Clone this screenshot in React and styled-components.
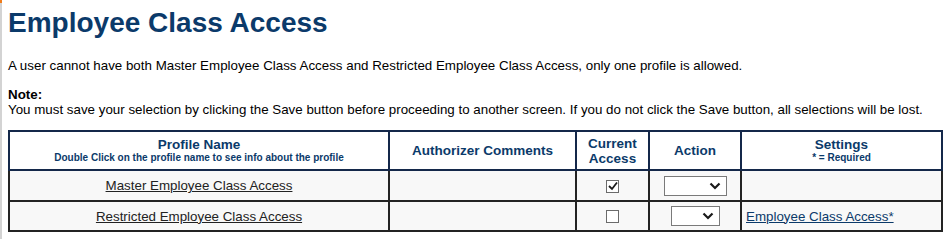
import React from 'react';
import styled, { createGlobalStyle } from 'styled-components';

const GlobalStyle = createGlobalStyle`
  html, body { margin: 0; padding: 0; background: #fff; }
  body { font-family: "Liberation Sans", Arial, sans-serif; color: #000; }
`;

const Page = styled.div`
  position: relative;
  border-left: 2px solid #d3d3d3;
  padding: 0 6px 10px 6px;
  min-height: 239px;
  box-sizing: border-box;
  &::before {
    content: '';
    position: absolute;
    left: -2px;
    top: 0;
    width: 2px;
    height: 3px;
    background: #f07c1a;
  }
`;

const Title = styled.h1`
  margin: 0;
  padding-top: 5px;
  font-size: 28px;
  line-height: 36px;
  font-weight: bold;
  color: #0b3a6a;
`;

const Text = styled.p`
  margin: ${p => p.$top || 0}px 0 0 0;
  font-size: 13.35px;
  line-height: 15px;
`;

const Bold = styled.div`
  font-weight: bold;
  font-size: 13.35px;
  line-height: 15px;
  margin-top: 14px;
`;

const Table = styled.table`
  margin-top: 13px;
  width: 933px;
  border-collapse: collapse;
  table-layout: fixed;
  font-size: 13.35px;
`;

const Col = styled.col`
  width: ${p => p.$w}px;
`;

const Th = styled.th`
  border: 2px solid #14284a;
  color: #0b3a6a;
  font-weight: bold;
  font-size: 13.5px;
  line-height: 15px;
  padding: 3px 4px;
  height: 31px;
  text-align: center;
  vertical-align: middle;
`;

const Sub = styled.div`
  font-size: 10px;
  line-height: 12px;
`;

const Td = styled.td`
  border: 2px solid #232323;
  background: #f8f8f8;
  height: ${p => p.$h || 28}px;
  padding: 0 4px;
  text-align: ${p => p.$align || 'center'};
  vertical-align: middle;
`;

const Link = styled.a`
  color: ${p => p.$blue ? '#0b3a6a' : '#222'};
  text-decoration: underline;
`;

const Check = styled.span`
  display: inline-block;
  width: 11px;
  height: 11px;
  border: 1px solid #6b6b6b;
  background: #fff;
  position: relative;
  vertical-align: middle;
  svg { position: absolute; left: 1px; top: 0px; }
`;

const SelectBox = styled.span`
  display: inline-flex;
  align-items: center;
  justify-content: flex-end;
  box-sizing: border-box;
  width: ${p => p.$w}px;
  height: 20px;
  border: 1px solid #7a7a7a;
  background: #fff;
  padding-right: 5px;
  vertical-align: middle;
`;

const Chevron = () => (
  <svg width="12" height="8" viewBox="0 0 12 8">
    <path d="M1.5 1.5 L6 6 L10.5 1.5" fill="none" stroke="#1a1a1a" strokeWidth="2.2" />
  </svg>
);

const Select = ({ w }) => (
  <SelectBox $w={w}><Chevron /></SelectBox>
);

const Checkbox = ({ checked }) => (
  <Check>
    {checked && (
      <svg width="10" height="10" viewBox="0 0 10 10">
        <path d="M1 5 L4 8 L9 1.5" fill="none" stroke="#1a1a1a" strokeWidth="1.8" />
      </svg>
    )}
  </Check>
);

export default function App() {
  return (
    <>
      <GlobalStyle />
      <Page>
        <Title>Employee Class Access</Title>
        <Text $top={17}>A user cannot have both Master Employee Class Access and Restricted Employee Class Access, only one profile is allowed.</Text>
        <Bold>Note:</Bold>
        <Text>You must save your selection by clicking the Save button before proceeding to another screen. If you do not click the Save button, all selections will be lost.</Text>
        <Table>
          <colgroup>
            <Col $w={380} />
            <Col $w={187} />
            <Col $w={73} />
            <Col $w={92} />
            <Col $w={201} />
          </colgroup>
          <thead>
            <tr>
              <Th>Profile Name<Sub>Double Click on the profile name to see info about the profile</Sub></Th>
              <Th>Authorizer Comments</Th>
              <Th>Current<br />Access</Th>
              <Th>Action</Th>
              <Th>Settings<Sub>* = Required</Sub></Th>
            </tr>
          </thead>
          <tbody>
            <tr>
              <Td $h={29}><Link href="#">Master Employee Class Access</Link></Td>
              <Td />
              <Td><Checkbox checked /></Td>
              <Td><Select w={63} /></Td>
              <Td $align="left" />
            </tr>
            <tr>
              <Td $h={27}><Link href="#">Restricted Employee Class Access</Link></Td>
              <Td />
              <Td><Checkbox /></Td>
              <Td><Select w={49} /></Td>
              <Td $align="left"><Link href="#" $blue>Employee Class Access*</Link></Td>
            </tr>
          </tbody>
        </Table>
      </Page>
    </>
  );
}
